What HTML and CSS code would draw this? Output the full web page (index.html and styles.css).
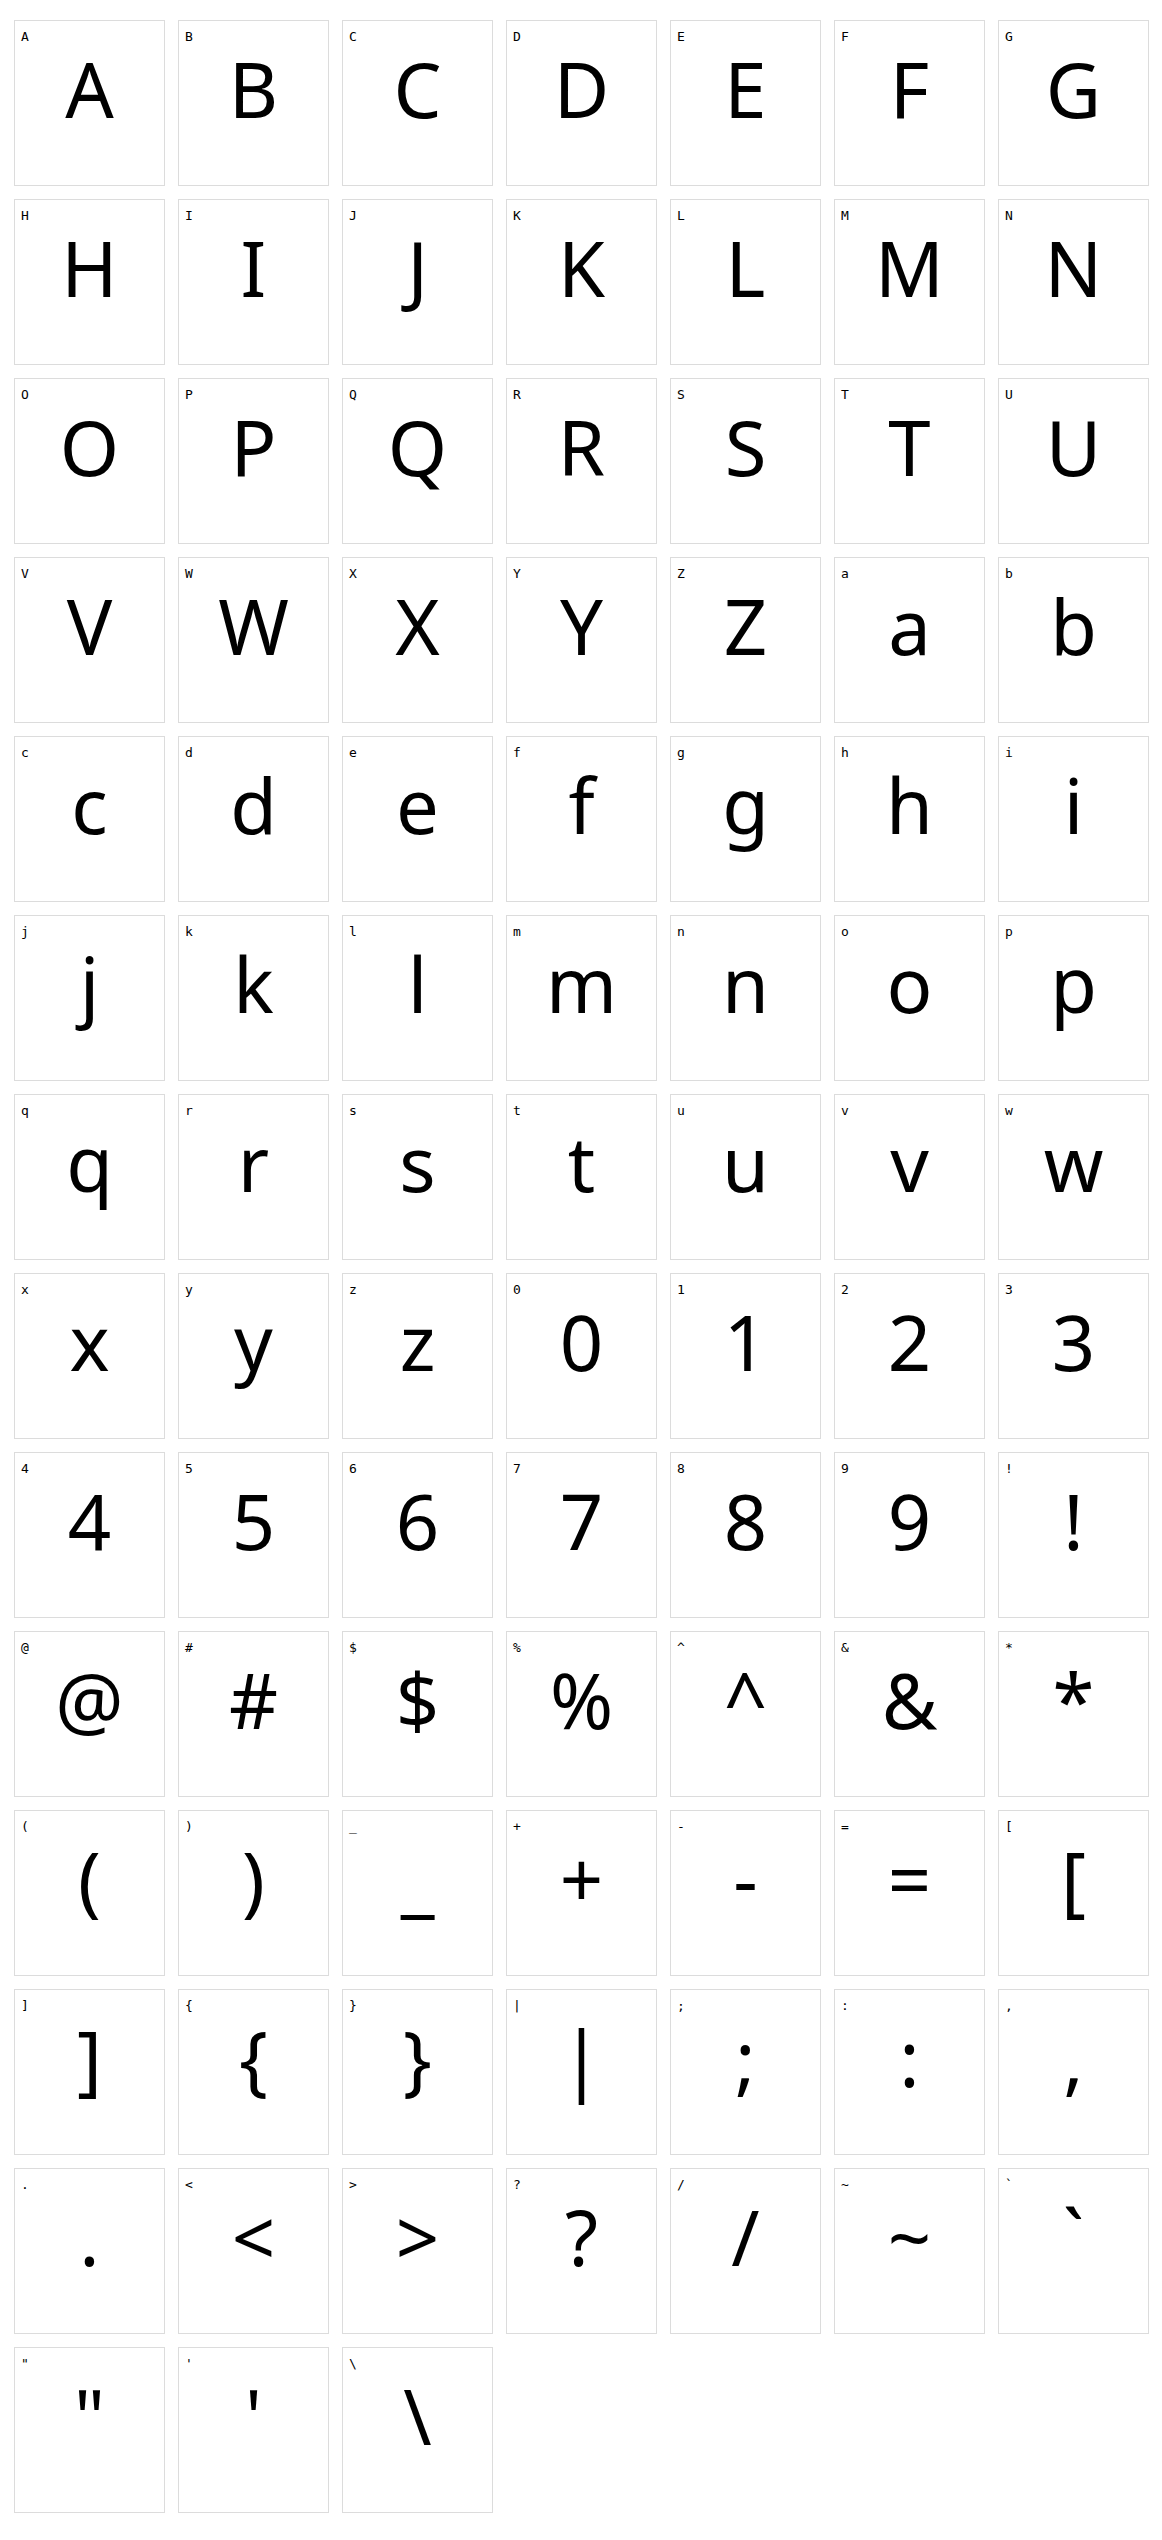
FILE: index.html
```html
<!DOCTYPE html>
<html lang="en">
<head>
    <meta charset="UTF-8">
    <meta name="viewport" content="width=device-width, initial-scale=1.0">
    <title>Glyph Sheet</title>
    <link rel="stylesheet" href="styles.css">
</head>
<body>
    <div class="grid">
        <div class="cell"><span class="label">A</span><span class="glyph">A</span></div>
        <div class="cell"><span class="label">B</span><span class="glyph">B</span></div>
        <div class="cell"><span class="label">C</span><span class="glyph">C</span></div>
        <div class="cell"><span class="label">D</span><span class="glyph">D</span></div>
        <div class="cell"><span class="label">E</span><span class="glyph">E</span></div>
        <div class="cell"><span class="label">F</span><span class="glyph">F</span></div>
        <div class="cell"><span class="label">G</span><span class="glyph">G</span></div>
        <div class="cell"><span class="label">H</span><span class="glyph">H</span></div>
        <div class="cell"><span class="label">I</span><span class="glyph">I</span></div>
        <div class="cell"><span class="label">J</span><span class="glyph">J</span></div>
        <div class="cell"><span class="label">K</span><span class="glyph">K</span></div>
        <div class="cell"><span class="label">L</span><span class="glyph">L</span></div>
        <div class="cell"><span class="label">M</span><span class="glyph">M</span></div>
        <div class="cell"><span class="label">N</span><span class="glyph">N</span></div>
        <div class="cell"><span class="label">O</span><span class="glyph">O</span></div>
        <div class="cell"><span class="label">P</span><span class="glyph">P</span></div>
        <div class="cell"><span class="label">Q</span><span class="glyph">Q</span></div>
        <div class="cell"><span class="label">R</span><span class="glyph">R</span></div>
        <div class="cell"><span class="label">S</span><span class="glyph">S</span></div>
        <div class="cell"><span class="label">T</span><span class="glyph">T</span></div>
        <div class="cell"><span class="label">U</span><span class="glyph">U</span></div>
        <div class="cell"><span class="label">V</span><span class="glyph">V</span></div>
        <div class="cell"><span class="label">W</span><span class="glyph">W</span></div>
        <div class="cell"><span class="label">X</span><span class="glyph">X</span></div>
        <div class="cell"><span class="label">Y</span><span class="glyph">Y</span></div>
        <div class="cell"><span class="label">Z</span><span class="glyph">Z</span></div>
        <div class="cell"><span class="label">a</span><span class="glyph">a</span></div>
        <div class="cell"><span class="label">b</span><span class="glyph">b</span></div>
        <div class="cell"><span class="label">c</span><span class="glyph">c</span></div>
        <div class="cell"><span class="label">d</span><span class="glyph">d</span></div>
        <div class="cell"><span class="label">e</span><span class="glyph">e</span></div>
        <div class="cell"><span class="label">f</span><span class="glyph">f</span></div>
        <div class="cell"><span class="label">g</span><span class="glyph">g</span></div>
        <div class="cell"><span class="label">h</span><span class="glyph">h</span></div>
        <div class="cell"><span class="label">i</span><span class="glyph">i</span></div>
        <div class="cell"><span class="label">j</span><span class="glyph">j</span></div>
        <div class="cell"><span class="label">k</span><span class="glyph">k</span></div>
        <div class="cell"><span class="label">l</span><span class="glyph">l</span></div>
        <div class="cell"><span class="label">m</span><span class="glyph">m</span></div>
        <div class="cell"><span class="label">n</span><span class="glyph">n</span></div>
        <div class="cell"><span class="label">o</span><span class="glyph">o</span></div>
        <div class="cell"><span class="label">p</span><span class="glyph">p</span></div>
        <div class="cell"><span class="label">q</span><span class="glyph">q</span></div>
        <div class="cell"><span class="label">r</span><span class="glyph">r</span></div>
        <div class="cell"><span class="label">s</span><span class="glyph">s</span></div>
        <div class="cell"><span class="label">t</span><span class="glyph">t</span></div>
        <div class="cell"><span class="label">u</span><span class="glyph">u</span></div>
        <div class="cell"><span class="label">v</span><span class="glyph">v</span></div>
        <div class="cell"><span class="label">w</span><span class="glyph">w</span></div>
        <div class="cell"><span class="label">x</span><span class="glyph">x</span></div>
        <div class="cell"><span class="label">y</span><span class="glyph">y</span></div>
        <div class="cell"><span class="label">z</span><span class="glyph">z</span></div>
        <div class="cell"><span class="label">0</span><span class="glyph">0</span></div>
        <div class="cell"><span class="label">1</span><span class="glyph">1</span></div>
        <div class="cell"><span class="label">2</span><span class="glyph">2</span></div>
        <div class="cell"><span class="label">3</span><span class="glyph">3</span></div>
        <div class="cell"><span class="label">4</span><span class="glyph">4</span></div>
        <div class="cell"><span class="label">5</span><span class="glyph">5</span></div>
        <div class="cell"><span class="label">6</span><span class="glyph">6</span></div>
        <div class="cell"><span class="label">7</span><span class="glyph">7</span></div>
        <div class="cell"><span class="label">8</span><span class="glyph">8</span></div>
        <div class="cell"><span class="label">9</span><span class="glyph">9</span></div>
        <div class="cell"><span class="label">!</span><span class="glyph">!</span></div>
        <div class="cell"><span class="label">@</span><span class="glyph">@</span></div>
        <div class="cell"><span class="label">#</span><span class="glyph">#</span></div>
        <div class="cell"><span class="label">$</span><span class="glyph">$</span></div>
        <div class="cell"><span class="label">%</span><span class="glyph">%</span></div>
        <div class="cell"><span class="label">^</span><span class="glyph">^</span></div>
        <div class="cell"><span class="label">&amp;</span><span class="glyph">&amp;</span></div>
        <div class="cell"><span class="label">*</span><span class="glyph">*</span></div>
        <div class="cell"><span class="label">(</span><span class="glyph">(</span></div>
        <div class="cell"><span class="label">)</span><span class="glyph">)</span></div>
        <div class="cell"><span class="label">_</span><span class="glyph">_</span></div>
        <div class="cell"><span class="label">+</span><span class="glyph">+</span></div>
        <div class="cell"><span class="label">-</span><span class="glyph">-</span></div>
        <div class="cell"><span class="label">=</span><span class="glyph">=</span></div>
        <div class="cell"><span class="label">[</span><span class="glyph">[</span></div>
        <div class="cell"><span class="label">]</span><span class="glyph">]</span></div>
        <div class="cell"><span class="label">{</span><span class="glyph">{</span></div>
        <div class="cell"><span class="label">}</span><span class="glyph">}</span></div>
        <div class="cell"><span class="label">|</span><span class="glyph">|</span></div>
        <div class="cell"><span class="label">;</span><span class="glyph">;</span></div>
        <div class="cell"><span class="label">:</span><span class="glyph">:</span></div>
        <div class="cell"><span class="label">,</span><span class="glyph">,</span></div>
        <div class="cell"><span class="label">.</span><span class="glyph">.</span></div>
        <div class="cell"><span class="label">&lt;</span><span class="glyph">&lt;</span></div>
        <div class="cell"><span class="label">&gt;</span><span class="glyph">&gt;</span></div>
        <div class="cell"><span class="label">?</span><span class="glyph">?</span></div>
        <div class="cell"><span class="label">/</span><span class="glyph">/</span></div>
        <div class="cell"><span class="label">~</span><span class="glyph">~</span></div>
        <div class="cell"><span class="label">`</span><span class="glyph">`</span></div>
        <div class="cell"><span class="label">"</span><span class="glyph">"</span></div>
        <div class="cell"><span class="label">'</span><span class="glyph">'</span></div>
        <div class="cell"><span class="label">\</span><span class="glyph">\</span></div>
    </div>
</body>
</html>
```

FILE: styles.css
```css
body {
    margin: 0;
    padding: 20px 13px 20px 14px;
    background-color: white;
    color: black;
}

.grid {
    display: grid;
    grid-template-columns: repeat(7, 151px);
    grid-auto-rows: 166px;
    gap: 13px;
}

.cell {
    display: flex;
    flex-direction: column;
    border: 1px solid #dcdcdc;
    padding: 8px 6px;
    box-sizing: border-box;
}

.label {
    font-family: "DejaVu Sans Mono", monospace;
    font-size: 13px;
    line-height: 16px;
}

.glyph {
    font-family: "Noto Sans", sans-serif;
    font-size: 76px;
    line-height: 1;
    text-align: center;
    margin-top: 6px;
}
```
